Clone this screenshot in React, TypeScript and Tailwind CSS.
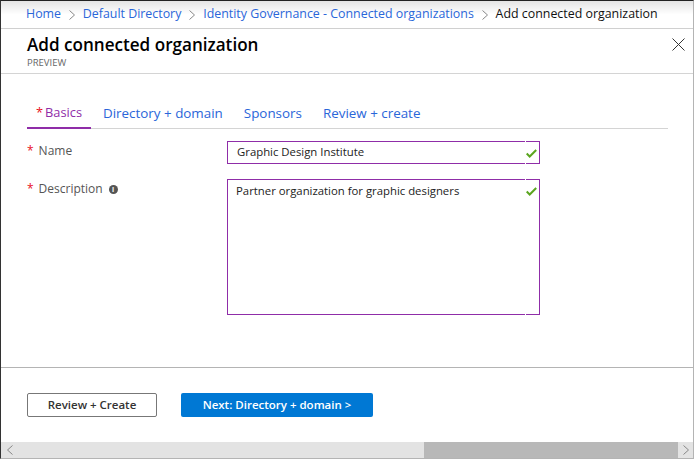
import React from 'react';

const crumbs = ['Home', 'Default Directory', 'Identity Governance - Connected organizations'];
const tabs = ['Directory + domain', 'Sponsors', 'Review + create'];

const Chevron = ({ className = '' }: { className?: string }) => (
  <svg width="8" height="12" viewBox="0 0 8 12" fill="none" className={className}>
    <path d="M1.5 1.5 6.5 6l-5 4.5" stroke="currentColor" strokeWidth="1" />
  </svg>
);

const Check = () => (
  <svg width="11" height="9" viewBox="0 0 11 9" fill="none" className="absolute right-[2px] top-[7px]">
    <path d="M.7 4.5 3.7 7.5 10.2 1" stroke="#5ba51f" strokeWidth="2" />
  </svg>
);

// the little white gaps in the field border, left of the check mark
const Notches = () => (
  <>
    <span className="absolute right-[13px] top-[-1px] h-px w-px bg-white" />
    <span className="absolute bottom-[-1px] right-[13px] h-px w-px bg-white" />
  </>
);

const Star = () => <span className="mr-[5px] text-[#e81123]">*</span>;

export default function App() {
  return (
    <div className="flex h-[459px] w-[694px] flex-col overflow-hidden border-l border-r border-t border-b border-t-[#222] border-l-[#333] border-r-[#b4b4b4] border-b-[#b4b4b4] bg-white font-['Open_Sans','Noto_Sans',sans-serif] text-[12px] text-[#333]">
      {/* breadcrumb */}
      <nav className="flex h-[28px] shrink-0 items-center border-b border-[#d0d0d0] bg-gradient-to-b from-[#e4e4e4] via-white to-white pl-[25px] text-[12.4px] text-[#2a66d9]">
        {crumbs.map((c) => (
          <React.Fragment key={c}>
            <span>{c}</span>
            <Chevron className="mx-[6.9px] text-[#888]" />
          </React.Fragment>
        ))}
        <span className="text-[#111]">Add connected organization</span>
      </nav>

      {/* blade header */}
      <header className="relative h-[45px] shrink-0 border-b border-[#d4d4d4] pl-[26px] pt-[4px]">
        <h1 className="text-[17.1px] leading-[23px] font-semibold text-black">Add connected organization</h1>
        <p className="mt-[1px] text-[9.5px] leading-[11px] text-[#666]">PREVIEW</p>
        <svg width="13" height="13" viewBox="0 0 13 13" className="absolute right-[8px] top-[9px]" stroke="#333" strokeWidth="1">
          <path d="M.5.5l12 12M12.5.5l-12 12" />
        </svg>
      </header>

      {/* tabs */}
      <div className="ml-[26px] mt-[29px] flex h-[26px] w-[641px] shrink-0 border-b border-[#d4d4d4] text-[13.4px] text-[#2a66d9]">
        <div className="h-[26px] w-[64px] border-b-2 border-[#8f2da8] pl-[9px] text-[12.8px] text-[#8f2da8]">
          <span className="mr-[2px] text-[#e81123]">*</span>Basics
        </div>
        <div className="ml-[12px] flex gap-[21px]">
          {tabs.map((t) => (
            <span key={t}>{t}</span>
          ))}
        </div>
      </div>

      {/* form */}
      <div className="flex grow flex-col gap-[15px] pl-[26px] pt-[12px]">
        <div className="flex">
          <label className="w-[200px] pt-[1px] text-[#555]">
            <Star />
            Name
          </label>
          <div className="relative flex h-[23px] w-[313px] items-center border border-[#8f2da8] pb-[2px] pl-[9px] text-[11.35px] text-[#222]">
            Graphic Design Institute
            <Notches />
            <Check />
          </div>
        </div>
        <div className="flex">
          <label className="flex w-[200px] items-start pt-[1px] text-[#555]">
            <span>
              <Star />
              Description
            </span>
            <span className="ml-[6px] mt-[5px] flex h-[9px] w-[9px] items-center justify-center rounded-full bg-[#555] text-[7px] leading-none font-bold text-white">
              i
            </span>
          </label>
          <div className="relative h-[136px] w-[313px] border border-[#8f2da8] pl-[8px] pt-[2px] text-[11.35px] text-[#222]">
            Partner organization for graphic designers
            <Notches />
            <Check />
          </div>
        </div>
      </div>

      {/* footer */}
      <footer className="flex h-[75px] shrink-0 items-start gap-[24px] border-t border-[#b4b4b4] pl-[26px] pt-[25px] text-[11.5px]">
        <button className="h-[24px] w-[130px] rounded-[2px] border border-[#777] bg-white font-semibold text-[#333]">
          Review + Create
        </button>
        <button className="h-[24px] w-[192px] rounded-[2px] bg-[#0078d4] font-semibold text-white">
          Next: Directory + domain &gt;
        </button>
      </footer>

      {/* horizontal scrollbar */}
      <div className="flex h-[16px] shrink-0 items-center bg-[#e3e3e3]">
        <Chevron className="ml-[5px] rotate-180 text-[#888]" />
        <div className="ml-auto h-full w-[254px] bg-[#b8b8b8]" />
        <div className="flex h-full w-[15px] items-center justify-center">
          <Chevron className="text-[#888]" />
        </div>
      </div>
    </div>
  );
}
